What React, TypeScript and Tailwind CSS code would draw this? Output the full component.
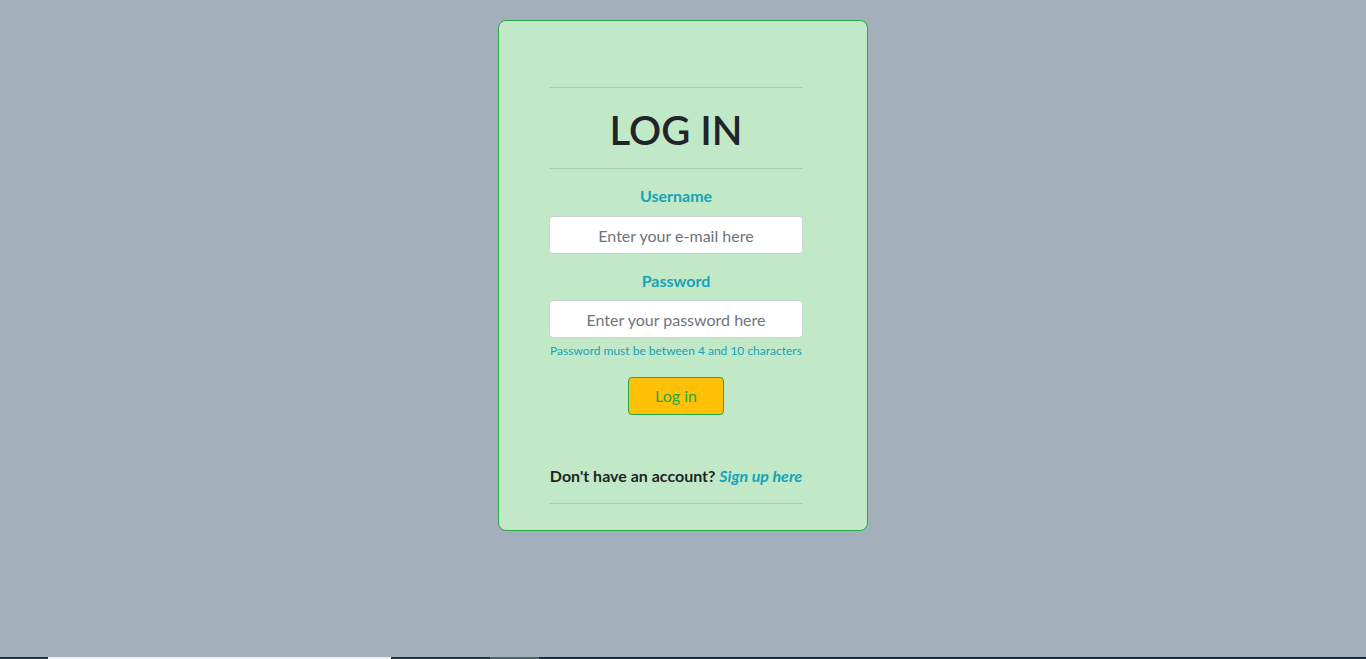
import React from "react";

const font = { fontFamily: '"Segoe UI", Lato, "Noto Sans", sans-serif' };

const LoginCard: React.FC = () => {
    return (
        <div className="mx-auto mt-[20px] w-[370px] h-[511px] rounded-lg border border-[#28a745] bg-[#c1e9c8] pl-[50px] pr-[64px] pt-[66px]">
            <hr className="border-0 border-t border-[#a8cdb0]" />
            <h1 className="mt-[18px] mb-[14px] text-center text-[40px] leading-[48px] font-semibold text-[#212529]">
                LOG IN
            </h1>
            <hr className="border-0 border-t border-[#a8cdb0]" />

            <form className="flex flex-col items-center" onSubmit={(e) => e.preventDefault()}>
                <label className="mt-[15px] text-[16px] leading-[24px] font-bold text-[#17a2b8]">
                    Username
                </label>
                <input
                    type="text"
                    placeholder="Enter your e-mail here"
                    className="mt-[8px] h-[38px] w-full rounded border border-[#ced4da] bg-white px-3 text-center text-[16px] text-[#495057] placeholder:text-[#6c757d] outline-none"
                    style={font}
                />

                <label className="mt-[15px] text-[16px] leading-[24px] font-bold text-[#17a2b8]">
                    Password
                </label>
                <input
                    type="password"
                    placeholder="Enter your password here"
                    className="mt-[7px] h-[38px] w-full rounded border border-[#ced4da] bg-white px-3 text-center text-[16px] text-[#495057] placeholder:text-[#6c757d] outline-none"
                    style={font}
                />
                <small className="mt-[4px] text-[12px] leading-[18px] text-[#17a2b8]">
                    Password must be between 4 and 10 characters
                </small>

                <button
                    type="submit"
                    className="mt-[17px] h-[38px] w-[96px] rounded border border-[#28a745] bg-[#ffc107] text-[16px] text-[#28a745]"
                    style={font}
                >
                    Log in
                </button>

                <p className="mt-[49px] text-[16px] leading-[24px] font-bold text-[#212529]">
                    Don't have an account?{" "}
                    <a href="#" className="italic text-[#17a2b8]">
                        Sign up here
                    </a>
                </p>
            </form>
            <hr className="mt-[15px] border-0 border-t border-[#a8cdb0]" />
        </div>
    );
};

export default function App() {
    return (
        <div className="flex h-screen flex-col bg-[#a3afbb]" style={font}>
            <div className="flex-1">
                <LoginCard />
            </div>
            {/* taskbar strip peeking at the bottom */}
            <div className="flex h-[2px]">
                <div className="w-[48px] bg-[#1e3540]" />
                <div className="w-[343px] bg-[#eeeeee]" />
                <div className="w-[99px] bg-[#1e3540]" />
                <div className="w-[49px] bg-[#4f6169]" />
                <div className="flex-1 bg-[#1c2b3a]" />
            </div>
        </div>
    );
}
